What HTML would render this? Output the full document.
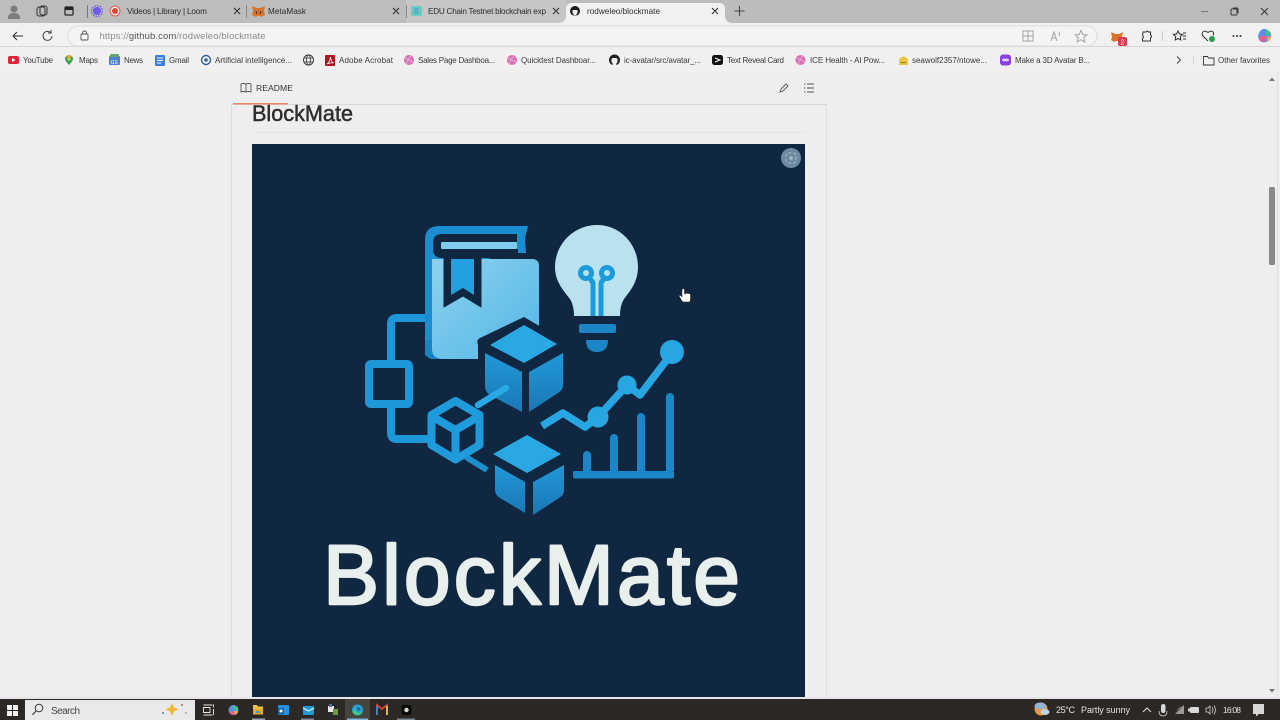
<!DOCTYPE html>
<html><head><meta charset="utf-8"><title>rodweleo/blockmate</title>
<style>html,body{margin:0;padding:0;width:1280px;height:720px;overflow:hidden;background:#eeedef}svg{display:block}text{font-family:"Liberation Sans",sans-serif}</style></head>
<body>
<svg width="1280" height="720" viewBox="0 0 1280 720" xmlns="http://www.w3.org/2000/svg">
<defs>
<linearGradient id="bk" x1="0" y1="0" x2="1" y2="1"><stop offset="0" stop-color="#8ed2ee"/><stop offset="1" stop-color="#52b6e6"/></linearGradient>
<linearGradient id="fc" x1="0" y1="0" x2="0" y2="1"><stop offset="0" stop-color="#2198d9"/><stop offset="1" stop-color="#1a78b6"/></linearGradient>
<linearGradient id="tb" x1="0" y1="0" x2="1" y2="0"><stop offset="0" stop-color="#bdbdbd"/><stop offset="1" stop-color="#bcbcbc"/></linearGradient>
</defs>
<!-- chrome backgrounds -->
<rect width="1280" height="720" fill="#eeedef"/>
<rect width="1280" height="23" fill="url(#tb)"/>
<rect y="23" width="1280" height="24" fill="#f2f1f2"/>
<rect y="46" width="1280" height="1" fill="#d6d6d6"/>
<rect y="47" width="1280" height="25" fill="#f0f0f0"/>
<!-- tabs -->
<rect x="406" y="0" width="160" height="23" fill="#c6c6c6"/>
<path d="M558 23q8 0 8-8V9q0-6 6-6h147q6 0 6 6v6q0 8 8 8z" fill="#f2f1f2"/>
<circle cx="14" cy="9" r="3.5" fill="#7d7d7d"/><path d="M8 18q0-5 6-5t6 5v1H8z" fill="#7d7d7d"/>
<rect x="37" y="7" width="8" height="9" rx="2" fill="none" stroke="#333" stroke-width="1"/><rect x="40" y="6" width="7" height="9" rx="2" fill="none" stroke="#333" stroke-width="1"/>
<rect x="65" y="7" width="8" height="8" rx="1" fill="none" stroke="#222" stroke-width="1.2"/><rect x="65" y="7" width="8" height="3" fill="#222"/>
<rect x="87" y="5" width="1" height="13" fill="#777"/>
<circle cx="97" cy="11" r="4" fill="#6a5ce8"/><circle cx="97" cy="11" r="5.4" fill="none" stroke="#6a5ce8" stroke-width="1.4" stroke-dasharray="1.6 1.2"/>
<circle cx="115" cy="11" r="5" fill="#eee" stroke="#e05a4c" stroke-width="1"/><circle cx="115" cy="11" r="3" fill="#e0483a"/>
<text x="127" y="14" font-size="8.2" fill="#2c2c2c" textLength="80">Videos | Library | Loom</text>
<path d="M234 8l6 6m0-6l-6 6M393 8l6 6m0-6l-6 6M553 8l6 6m0-6l-6 6M712 8l6 6m0-6l-6 6" stroke="#2a2a2a" stroke-width="1" fill="none"/>
<rect x="246" y="5" width="1" height="13" fill="#888"/>
<path d="M252 6l5 2h3l5-2-1 5 1 4-4 2-1-1h-3l-1 1-4-2 1-4z" fill="#d9752a"/><path d="M256 11l1 3M261 11l-1 3" stroke="#3a2b20" stroke-width="1"/>
<text x="268" y="14" font-size="8.2" fill="#2c2c2c" textLength="38">MetaMask</text>
<rect x="406" y="5" width="1" height="13" fill="#888"/>
<rect x="411" y="6" width="11" height="10" rx="2" fill="#63cdc4"/><path d="M414 9h5M414 11h4M414 13h5" stroke="#5d8fc4" stroke-width="1"/>
<text x="428" y="14" font-size="8.2" fill="#2c2c2c" textLength="118">EDU Chain Testnet blockchain exp</text>
<circle cx="575" cy="11" r="5" fill="#1c1c1c"/><path d="M573.500 15.500h3V14l1-1v-3h-5v3l1 1z" fill="#f2f1f2"/>
<text x="587" y="14" font-size="8.2" fill="#2c2c2c" textLength="73">rodweleo/blockmate</text>
<path d="M739.500 6v10M734.500 11h10" stroke="#444" stroke-width="1" fill="none"/>
<!-- window controls -->
<path d="M1201 11.500h7" stroke="#777" stroke-width="1"/>
<rect x="1231" y="9" width="6" height="6" rx="1" fill="none" stroke="#333" stroke-width="1"/><path d="M1233 8h4q1 0 1 1v4" fill="none" stroke="#333" stroke-width="1"/>
<path d="M1261 8l7 7m0-7l-7 7" stroke="#333" stroke-width="1" fill="none"/>
<!-- toolbar -->
<path d="M23 36H13m4-4l-4 4 4 4" stroke="#2d2d2d" stroke-width="1" fill="none"/>
<path d="M52 36a4.500 4.500 0 1 1-1.500-3.500M51 30v3h-3" stroke="#444" stroke-width="1" fill="none"/>
<rect x="68" y="26" width="1029" height="20" rx="10" fill="#f5f4f5" stroke="#dcdcdc" stroke-width="1"/>
<rect x="81" y="34" width="7" height="6" rx="1" fill="none" stroke="#555" stroke-width="0.9"/><path d="M82.500 34v-1a2 2 0 0 1 4 0v1" fill="none" stroke="#555" stroke-width="0.9"/>
<text x="99.500" y="39" font-size="9.500" fill="#8c8c8c" textLength="166">https://<tspan fill="#555">github.com</tspan>/rodweleo/blockmate</text>
<g fill="none" stroke="#a3a3a3" stroke-width="1">
<rect x="1023" y="31" width="10" height="10"/><path d="M1028 31v10M1023 36h10"/>
<path d="M1051 41l3-9 3 9m-5-3h4M1059 32q1 2 0 4"/>
<path d="M1081 30.500l1.800 4 4.200.4-3.200 2.800 1 4.300-3.800-2.300-3.800 2.300 1-4.300-3.200-2.800 4.200-.4z"/>
</g>
<path d="M1111 32l4 2h4l4-2-1 5 1 3-3 2-2-1h-2l-2 1-3-2 1-3z" fill="#d9752a"/><rect x="1118" y="37" width="9" height="9" rx="2" fill="#d83a50"/><text x="1120.500" y="44.500" font-size="7" fill="#fff">2</text>
<path d="M1143 32h3q1-2 2.500 0h2v3q2 1 0 3v3h-8v-2.500q2-1.500 0-3z" fill="none" stroke="#333" stroke-width="1"/>
<rect x="1162" y="31" width="1" height="10" fill="#ccc"/>
<path d="M1178 31l1.500 3 3 .4-2.200 2.200.5 3.400-2.800-1.500-2.800 1.500.5-3.400-2.200-2.200 3-.4zM1183 33h3M1183 36h3M1183 39h3" fill="none" stroke="#333" stroke-width="1"/>
<path d="M1208 41l-5-5q-2-3 .5-4.500 2-1 4.500 1 2.500-2 4.500-1 2 1.500.5 4" fill="none" stroke="#333" stroke-width="1"/><circle cx="1212" cy="39" r="3" fill="#2a9d4a"/>
<g fill="#333"><circle cx="1233.500" cy="36" r="1"/><circle cx="1237" cy="36" r="1"/><circle cx="1240.500" cy="36" r="1"/></g>
<path d="M1259 33q2-5 7-4l3 2q3 2 2 6-1 4-5 5-4 1-6-1-3-3-1-8z" fill="#5a8fe8"/><path d="M1266 29l4 3 1 4-5-1z" fill="#42c08e"/><path d="M1259 38q1 4 5 4l3-5-5-2z" fill="#e8608c"/><path d="M1267 37l4-1q0 4-4 6z" fill="#f0a640"/>
<!-- bookmarks -->
<g font-size="8" fill="#3a3a3a">
<rect x="8" y="56" width="11" height="8" rx="2" fill="#e0223a"/><path d="M12 58l3.500 2-3.500 2z" fill="#fff"/>
<text x="23" y="63" textLength="30">YouTube</text>
<path d="M69 55a4 4 0 0 1 4 4q0 2-4 6-4-4-4-6a4 4 0 0 1 4-4z" fill="#3aa757"/><circle cx="69" cy="59" r="1.500" fill="#f7d04b"/><path d="M66 56l3 3 3-3q-3-2-6 0z" fill="#e8a53a"/>
<text x="79" y="63" textLength="19">Maps</text>
<rect x="109" y="56" width="11" height="9" rx="1" fill="#4d7fd0"/><rect x="110" y="54" width="9" height="3" rx="1" fill="#6aa36a"/><text x="110.500" y="64" font-size="5" fill="#fff">GS</text>
<text x="124" y="63" textLength="19">News</text>
<rect x="155" y="55" width="10" height="11" rx="1" fill="#3f7fe0"/><path d="M157 58h6M157 60.500h6M157 63h4" stroke="#fff" stroke-width="1"/>
<text x="169" y="63" textLength="20">Gmail</text>
<circle cx="206" cy="60" r="4.500" fill="none" stroke="#3060a8" stroke-width="1.400"/><circle cx="206" cy="60" r="1.800" fill="#3060a8"/>
<text x="215" y="63" textLength="77">Artificial intelligence...</text>
<circle cx="308.500" cy="60" r="5" fill="none" stroke="#333" stroke-width="0.900"/><ellipse cx="308.500" cy="60" rx="2" ry="5" fill="none" stroke="#333" stroke-width="0.800"/><path d="M304 58h9M304 62h9" stroke="#333" stroke-width="0.700"/>
<rect x="325" y="55" width="10" height="11" rx="1" fill="#b3161c"/><path d="M327 64q3-2 3.500-7 .5 5 3 6-3-.5-6.500 1z" fill="none" stroke="#fff" stroke-width="0.800"/>
<text x="339" y="63" textLength="54">Adobe Acrobat</text>
<circle cx="409" cy="60" r="5" fill="#d96fb4"/><path d="M405 58l8 4M406 64q3-6 5-8" stroke="#f2b8dc" stroke-width="0.800"/>
<text x="418" y="63" textLength="77">Sales Page Dashboa...</text>
<circle cx="512" cy="60" r="5" fill="#d96fb4"/><path d="M508 58l8 4M509 64q3-6 5-8" stroke="#f2b8dc" stroke-width="0.800"/>
<text x="521" y="63" textLength="75">Quicktest Dashboar...</text>
<circle cx="614.500" cy="60" r="5.500" fill="#222"/><path d="M612.500 66v-3l-1-1v-3l1-1h4l1 1v3l-1 1v3z" fill="#f0f0f0"/>
<text x="624" y="63" textLength="77">ic-avatar/src/avatar_...</text>
<rect x="712" y="55" width="11" height="10" rx="2.500" fill="#111"/><path d="M715 58l5 2-5 2" fill="none" stroke="#fff" stroke-width="1"/>
<text x="727" y="63" textLength="57">Text Reveal Card</text>
<circle cx="800.500" cy="60" r="5" fill="#d96fb4"/><path d="M797 58l8 4M798 64q3-6 5-8" stroke="#f2b8dc" stroke-width="0.800"/>
<text x="810" y="63" textLength="75">ICE Health - AI Pow...</text>
<path d="M899 65v-4a4.500 4.500 0 0 1 9 0v4z" fill="#eec43c"/><path d="M901 62q2.500 1.500 5 0" stroke="#8a6b10" stroke-width="0.800" fill="none"/>
<text x="912" y="63" textLength="75">seawolf2357/ntowe...</text>
<rect x="1000" y="54.500" width="11" height="11" rx="3" fill="#8a3fe0"/><path d="M1002.500 60q1.500-2 3 0t3 0q-1.500-2-3 0t-3 0" stroke="#fff" stroke-width="0.900" fill="none"/>
<text x="1015" y="63" textLength="75">Make a 3D Avatar B...</text>
<path d="M1177 56.500l3.500 3.500-3.500 3.500" fill="none" stroke="#444" stroke-width="1"/>
<rect x="1193" y="55" width="1" height="10" fill="#d8d8d8"/>
<path d="M1203.500 56.500h4l1 1.500h5.500v7h-10.500z" fill="none" stroke="#333" stroke-width="0.900"/>
<text x="1218" y="63" textLength="52">Other favorites</text>
</g>
<!-- readme frame -->
<rect x="231" y="104" width="1" height="596" fill="#dbdadc"/>
<rect x="826" y="104" width="1" height="596" fill="#dfdee0"/>
<rect x="231" y="104" width="596" height="1" fill="#d8d7d9"/>
<rect x="233" y="103" width="55" height="1.500" fill="#ee8468"/>
<path d="M246 84q-3-1-5 0v8q2-1 5 0 3-1 5 0v-8q-2-1-5 0zv8" fill="none" stroke="#555" stroke-width="0.900"/>
<text x="256" y="91" font-size="8.600" fill="#333" textLength="37">README</text>
<path d="M780 92l1-3 5-5 2 2-5 5z" fill="none" stroke="#555" stroke-width="0.900"/>
<path d="M807 84h7M807 88h7M807 92h7" stroke="#555" stroke-width="0.900"/><path d="M804 84h1.500M804 88h1.500M804 92h1.500" stroke="#555" stroke-width="0.900"/>
<text x="252" y="121" font-size="22.500" fill="#2e2e30" stroke="#2e2e30" stroke-width="0.500" textLength="101" lengthAdjust="spacingAndGlyphs">BlockMate</text>
<rect x="252" y="132" width="553" height="1" fill="#e5e4e6"/>
<!-- image -->
<rect x="252" y="144" width="553" height="553" fill="#0f2740"/>
<circle cx="791" cy="158" r="10" fill="#6e8aa3"/>
<rect x="786" y="153" width="10" height="10" rx="2.500" fill="none" stroke="#a8bccb" stroke-width="1" stroke-dasharray="3 2"/><circle cx="791" cy="158" r="1.800" fill="#a8bccb"/>
<!-- network lines -->
<g fill="none" stroke="#1d97d8">
<path d="M428 318H397q-6 0-6 6V362" stroke-width="8"/>
<rect x="369" y="364" width="40" height="40" rx="2" stroke-width="8"/>
<path d="M391 406v27q0 6 6 6H432" stroke-width="8"/>
</g>
<!-- book -->
<path d="M425 355V240q0-14 14-14h89l-3 12 1 15h-9l-30 6h-55v100z" fill="#1a8ed1"/>
<path d="M432 259H532q7 0 7 7V359H440q-8 0-8-8z" fill="url(#bk)"/>
<path d="M425 340v10q0 9 9 9h8q-10-1-10-10v-9z" fill="#1585c6"/>
<path d="M517 234H442q-9 0-9 9v6q0 9 9 9H518V249H442q-1 0-1-3.500t1-3.500H517z" fill="#0f2740"/>
<rect x="441" y="242" width="76" height="7" rx="1.500" fill="#7fcdec"/>
<path d="M444 256V307L463 296L481 307V256z" fill="#0f2740" stroke="#0f2740" stroke-width="1" stroke-linejoin="round"/>
<path d="M451 259H474V295L463 288L451 295z" fill="#23a0df"/>
<!-- bulb -->
<path d="M597 225c23 0 41 19 41 42 0 15-8 24-14 32-3 5-4 11-4 17h-46c0-6-1-12-4-17-6-8-15-17-15-32 0-23 19-42 42-42z" fill="#b9e2ee"/>
<g fill="none" stroke="#1b9bdc" stroke-width="5">
<circle cx="586" cy="273" r="5.500"/><circle cx="607" cy="273" r="5.500"/>
<path d="M593 316V284q0-4-4-4M601 316V284q0-4 4-4"/>
</g>
<rect x="579" y="324" width="37" height="9" rx="2" fill="#1a86c7"/>
<path d="M586 340h22q0 12-11 12t-11-12z" fill="#1a86c7"/>
<!-- big cube -->
<path d="M524 317L558 337L570 346V393Q570 397 566 399L530 419H520L487 396Q478 392 478 385V345Q476 340 480 338z" fill="#0f2740"/>
<path d="M524 325L557 344L524 363L490 345z" fill="#2aa8e3"/>
<path d="M485 353L522 372V412L492 396Q485 393 485 386z" fill="url(#fc)"/>
<path d="M563 353V385Q563 390 558 393L529 412V372z" fill="url(#fc)"/>
<!-- small cube -->
<path d="M478 405L506 388" stroke="#2aa8e6" stroke-width="6.500" stroke-linecap="round" fill="none"/>
<path d="M466 457L487 470" stroke="#1b8ecf" stroke-width="6" fill="none"/>
<path d="M455.500 401L479.500 415V445L455.500 459.500L431.500 445V415zM431.500 416L455.500 430L479.500 416M455.500 430V459" fill="none" stroke="#1f9bdc" stroke-width="8" stroke-linejoin="round"/>
<!-- bottom cube -->
<path d="M527 435L561 454L527 473L493 454z" fill="#2aa8e3"/>
<path d="M495 465L525 482V513L500 498Q495 495 495 490z" fill="url(#fc)"/>
<path d="M564 465V490Q564 495 559 498L533 515V482z" fill="url(#fc)"/>
<!-- chart -->
<g fill="#1b86c8">
<rect x="573" y="471" width="101" height="7.500" rx="2"/>
<path d="M583 471V455a4 4 0 0 1 8 0V471zM610 471V438a4 4 0 0 1 8 0V471zM637 471V417a4 4 0 0 1 8 0V471zM666 471V397a4 4 0 0 1 8 0V471z"/>
</g>
<path d="M542 426L563 413L585 427L598 417L627 385L640 395L672 353" fill="none" stroke="#27a6e3" stroke-width="7.500" stroke-linejoin="round"/>
<g fill="#27a6e3"><circle cx="672" cy="352" r="12"/><circle cx="627" cy="385" r="9.500"/><circle cx="598" cy="417" r="10.500"/></g>
<!-- wordmark -->
<text x="323" y="604" font-size="84" fill="#e9efec" stroke="#e9efec" stroke-width="2.400" stroke-linejoin="round" textLength="417" lengthAdjust="spacing">BlockMate</text>
<!-- cursor -->
<path d="M682 301l-3-5q0-1 1.500-.5l1.500 1.500V290q.5-1.500 1.500-1.500t1 1.500v4h1v-.5q1-1 1.800 0 1-.7 1.700.3 1-.5 1.500.7v4q0 2.500-1 3.500h-6z" fill="#fff" stroke="#222" stroke-width="0.500"/>
<!-- scrollbar -->
<rect x="1277" y="72" width="1" height="625" fill="#dedddf"/>
<path d="M1272 77.500l3 3.500h-6z" fill="#77767a"/>
<rect x="1269" y="187" width="6" height="78" rx="1.500" fill="#8a898c"/>
<path d="M1272 692.500l3-3.500h-6z" fill="#77767a"/>
<rect y="697" width="1280" height="3" fill="#e6e5e7"/>
<rect x="252" y="695" width="553" height="2" fill="#0f2740"/>
<!-- taskbar -->
<rect y="699" width="1280" height="21" fill="#2b2825"/>
<g fill="#f0f0f0"><rect x="7" y="705" width="5" height="5"/><rect x="13" y="705" width="5" height="5"/><rect x="7" y="711" width="5" height="5"/><rect x="13" y="711" width="5" height="5"/></g>
<rect x="25" y="700" width="170" height="20" fill="#e9e9e9"/>
<circle cx="39" cy="708" r="3.800" fill="none" stroke="#333" stroke-width="1"/><path d="M36 711l-3.500 4" stroke="#333" stroke-width="1"/>
<text x="51" y="714" font-size="10" fill="#444" textLength="29">Search</text>
<path d="M172 703l2 4.500 4.500 2-4.500 2-2 4.500-2-4.500-4.500-2 4.500-2z" fill="#f0b93a"/><circle cx="163" cy="713" r="1" fill="#3a8ac0"/><circle cx="182" cy="705" r="1" fill="#d0603a"/><circle cx="186" cy="713" r="0.800" fill="#5a9a5a"/>
<path d="M203.500 705h9M203.500 715h9M203.500 707.500v5h6.500v-5zM213.500 704.500v3M213.500 709v6" fill="none" stroke="#e8e8e8" stroke-width="0.900"/>
<circle cx="233.500" cy="710" r="5" fill="#5a8fe8"/><path d="M233 705l5 2v4l-5-1z" fill="#42c08e"/><path d="M229 712q1 3 5 3l1-4z" fill="#e8608c"/><path d="M234 711l4 0q0 3-3 4z" fill="#f0a640"/>
<path d="M253 705h4l1 1.500h5v8h-10z" fill="#f2c33f"/><rect x="253" y="709" width="10" height="5.500" fill="#e8a825"/><rect x="256" y="711" width="4" height="2" fill="#3aa0dc"/>
<rect x="278" y="705" width="11" height="10" rx="1" fill="#2a8fdb"/><rect x="278" y="708" width="6" height="6.500" fill="#1462a8"/><circle cx="281" cy="711" r="1.500" fill="#fff"/>
<rect x="303" y="706" width="11" height="9" rx="1" fill="#1f9bd8"/><path d="M303 708l5.500 3 5.500-3" stroke="#e8f4fa" stroke-width="1" fill="none"/>
<rect x="328" y="706" width="6" height="6" fill="#e8e8e8"/><rect x="333" y="709" width="5" height="6" fill="#6a9a3a"/><rect x="329" y="704" width="3" height="3" fill="#3a7ac0"/>
<rect x="345" y="699" width="25" height="21" fill="#45443f"/>
<circle cx="357.500" cy="710" r="5.500" fill="#2aa0d0"/><path d="M352.500 712q2 3.500 5.500 3 3.500-.5 5-4-3 3-6 1-1.500-1-1-3-3 1-3.500 3z" fill="#45c97a"/><circle cx="358.500" cy="709" r="1.800" fill="#1a6aa8"/>
<path d="M377 715v-10l5 4 5-4v10" fill="none" stroke="#d8433a" stroke-width="1.800"/><path d="M377 706v9" stroke="#3a8ad0" stroke-width="1.800"/><path d="M387 706v9" stroke="#e6c23a" stroke-width="1.800"/>
<rect x="401.500" y="705" width="10" height="10" rx="2" fill="#0b0b0b"/><circle cx="406.500" cy="710" r="2.200" fill="#d8d8d8"/>
<rect x="347" y="718.500" width="21" height="1.500" fill="#7ab8dc"/><rect x="252" y="718.500" width="13" height="1.500" fill="#9aa6b0"/><rect x="397" y="718.500" width="18" height="1.500" fill="#7d8a95"/><rect x="301" y="718.500" width="13" height="1.500" fill="#7d8a95"/>
<!-- tray -->
<circle cx="1041" cy="709" r="6.500" fill="#e89a3c"/><ellipse cx="1040" cy="706" rx="5.500" ry="3.500" fill="#8fb4d8"/><ellipse cx="1045" cy="712" rx="4.500" ry="3" fill="#c2d4e4"/>
<g font-size="9" fill="#e2e2e2">
<text x="1056" y="713" textLength="19">25°C</text>
<text x="1081" y="713" textLength="49">Partly sunny</text>
<text x="1223" y="713" font-size="8.500" textLength="18">16:08</text>
</g>
<path d="M1143 712l4-4 4 4" fill="none" stroke="#e2e2e2" stroke-width="1"/>
<rect x="1161" y="704" width="4.500" height="9" rx="2.200" fill="#d8d8d8"/><path d="M1159 711q0 5 4 5t4-5" fill="none" stroke="#d8d8d8" stroke-width="0.800"/>
<path d="M1175 714l9-9v9zM1176 711q3-4 7-5" fill="#9a9a9a"/>
<rect x="1190" y="707" width="9" height="6" rx="1" fill="#d8d8d8"/><rect x="1188" y="708.500" width="2" height="3" fill="#d8d8d8"/>
<path d="M1206 708v4h2l2 2v-8l-2 2zM1212 707q2 3 0 6M1214 705.500q3 4.500 0 9" fill="none" stroke="#d0d0d0" stroke-width="0.800"/>
<path d="M1253 704h11v10h-5l-3 2.500V714h-3z" fill="#d6d6d6"/>
</svg>
</body></html>
